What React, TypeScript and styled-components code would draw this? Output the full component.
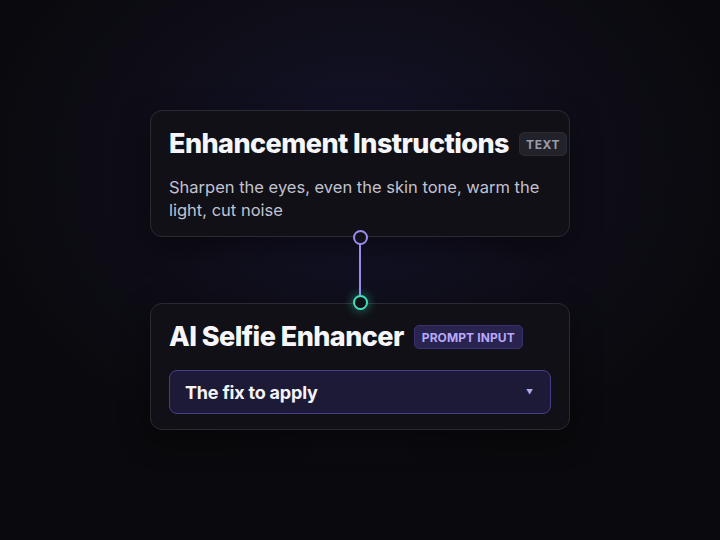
import styled, { createGlobalStyle } from 'styled-components';

const GlobalStyle = createGlobalStyle`
  html, body {
    margin: 0;
    padding: 0;
    background: #0a0a0e;
  }
  * { box-sizing: border-box; }
`;

const Page = styled.div`
  width: 720px;
  height: 540px;
  display: flex;
  flex-direction: column;
  align-items: center;
  justify-content: center;
  font-family: Inter, 'Liberation Sans', sans-serif;
  background: radial-gradient(ellipse 380px 300px at 360px 170px, #16142e 0%, #0f0e1a 50%, #0a0a0e 100%);
`;

const Card = styled.div`
  width: 420px;
  height: 127px;
  background: #101016;
  border: 1px solid #2a2a34;
  border-radius: 12px;
  padding: 16px 18px 0 18px;
  display: flex;
  flex-direction: column;
  box-shadow: 0 10px 30px rgba(0, 0, 0, 0.45);
`;

const TitleRow = styled.div`
  display: flex;
  align-items: center;
  gap: 10px;
`;

const Title = styled.h2`
  margin: 0;
  font-size: 27px;
  line-height: 34px;
  font-weight: 800;
  letter-spacing: -0.55px;
  color: #f6f6fa;
  white-space: nowrap;
`;

const Badge = styled.span<{ $accent?: boolean }>`
  display: inline-flex;
  align-items: center;
  height: 24px;
  padding: 0 ${p => (p.$accent ? '7px' : '6px')};
  border-radius: 5px;
  font-size: 12px;
  font-weight: 700;
  letter-spacing: ${p => (p.$accent ? '0.1px' : '0.6px')};
  color: ${p => (p.$accent ? '#b7a8fa' : '#9c9ca8')};
  background: ${p => (p.$accent ? '#29234f' : '#22222a')};
  border: 1px solid ${p => (p.$accent ? '#3a3270' : '#2c2c36')};
`;

const Body = styled.p`
  margin: 15px 0 0 0;
  font-size: 16.5px;
  line-height: 23px;
  color: #c2c2d0;
`;

const Connector = styled.div`
  position: relative;
  width: 16px;
  height: 66px;
  display: flex;
  justify-content: center;
`;

const Wire = styled.div`
  width: 2px;
  height: 100%;
  background: #9a8bf0;
`;

const Port = styled.div<{ $color: string; $top: boolean }>`
  position: absolute;
  left: 1px;
  ${p => (p.$top ? 'top: -7px;' : 'bottom: -7px;')}
  width: 15px;
  height: 15px;
  border-radius: 50%;
  background: #111118;
  border: 2px solid ${p => p.$color};
  box-shadow: ${p => (p.$top ? 'none' : `0 0 10px 2px ${p.$color}55`)};
`;

const Select = styled.div`
  margin-top: 16px;
  height: 44px;
  border-radius: 8px;
  background: #1d1a38;
  border: 1px solid #463e8a;
  display: flex;
  align-items: center;
  justify-content: space-between;
  padding: 0 17px 0 15px;
`;

const SelectText = styled.span`
  font-size: 18px;
  font-weight: 700;
  color: #f4f4f8;
  letter-spacing: -0.2px;
`;

const Caret = styled.span`
  font-size: 7px;
  color: #b0aee0;
`;

export default function App() {
  return (
    <Page>
      <GlobalStyle />
      <Card>
        <TitleRow>
          <Title>Enhancement Instructions</Title>
          <Badge>TEXT</Badge>
        </TitleRow>
        <Body>Sharpen the eyes, even the skin tone, warm the light, cut noise</Body>
      </Card>
      <Connector>
        <Port $color="#9a8aef" $top />
        <Wire />
        <Port $color="#3fe0b8" $top={false} />
      </Connector>
      <Card>
        <TitleRow>
          <Title>AI Selfie Enhancer</Title>
          <Badge $accent>PROMPT INPUT</Badge>
        </TitleRow>
        <Select>
          <SelectText>The fix to apply</SelectText>
          <Caret>▼</Caret>
        </Select>
      </Card>
    </Page>
  );
}
